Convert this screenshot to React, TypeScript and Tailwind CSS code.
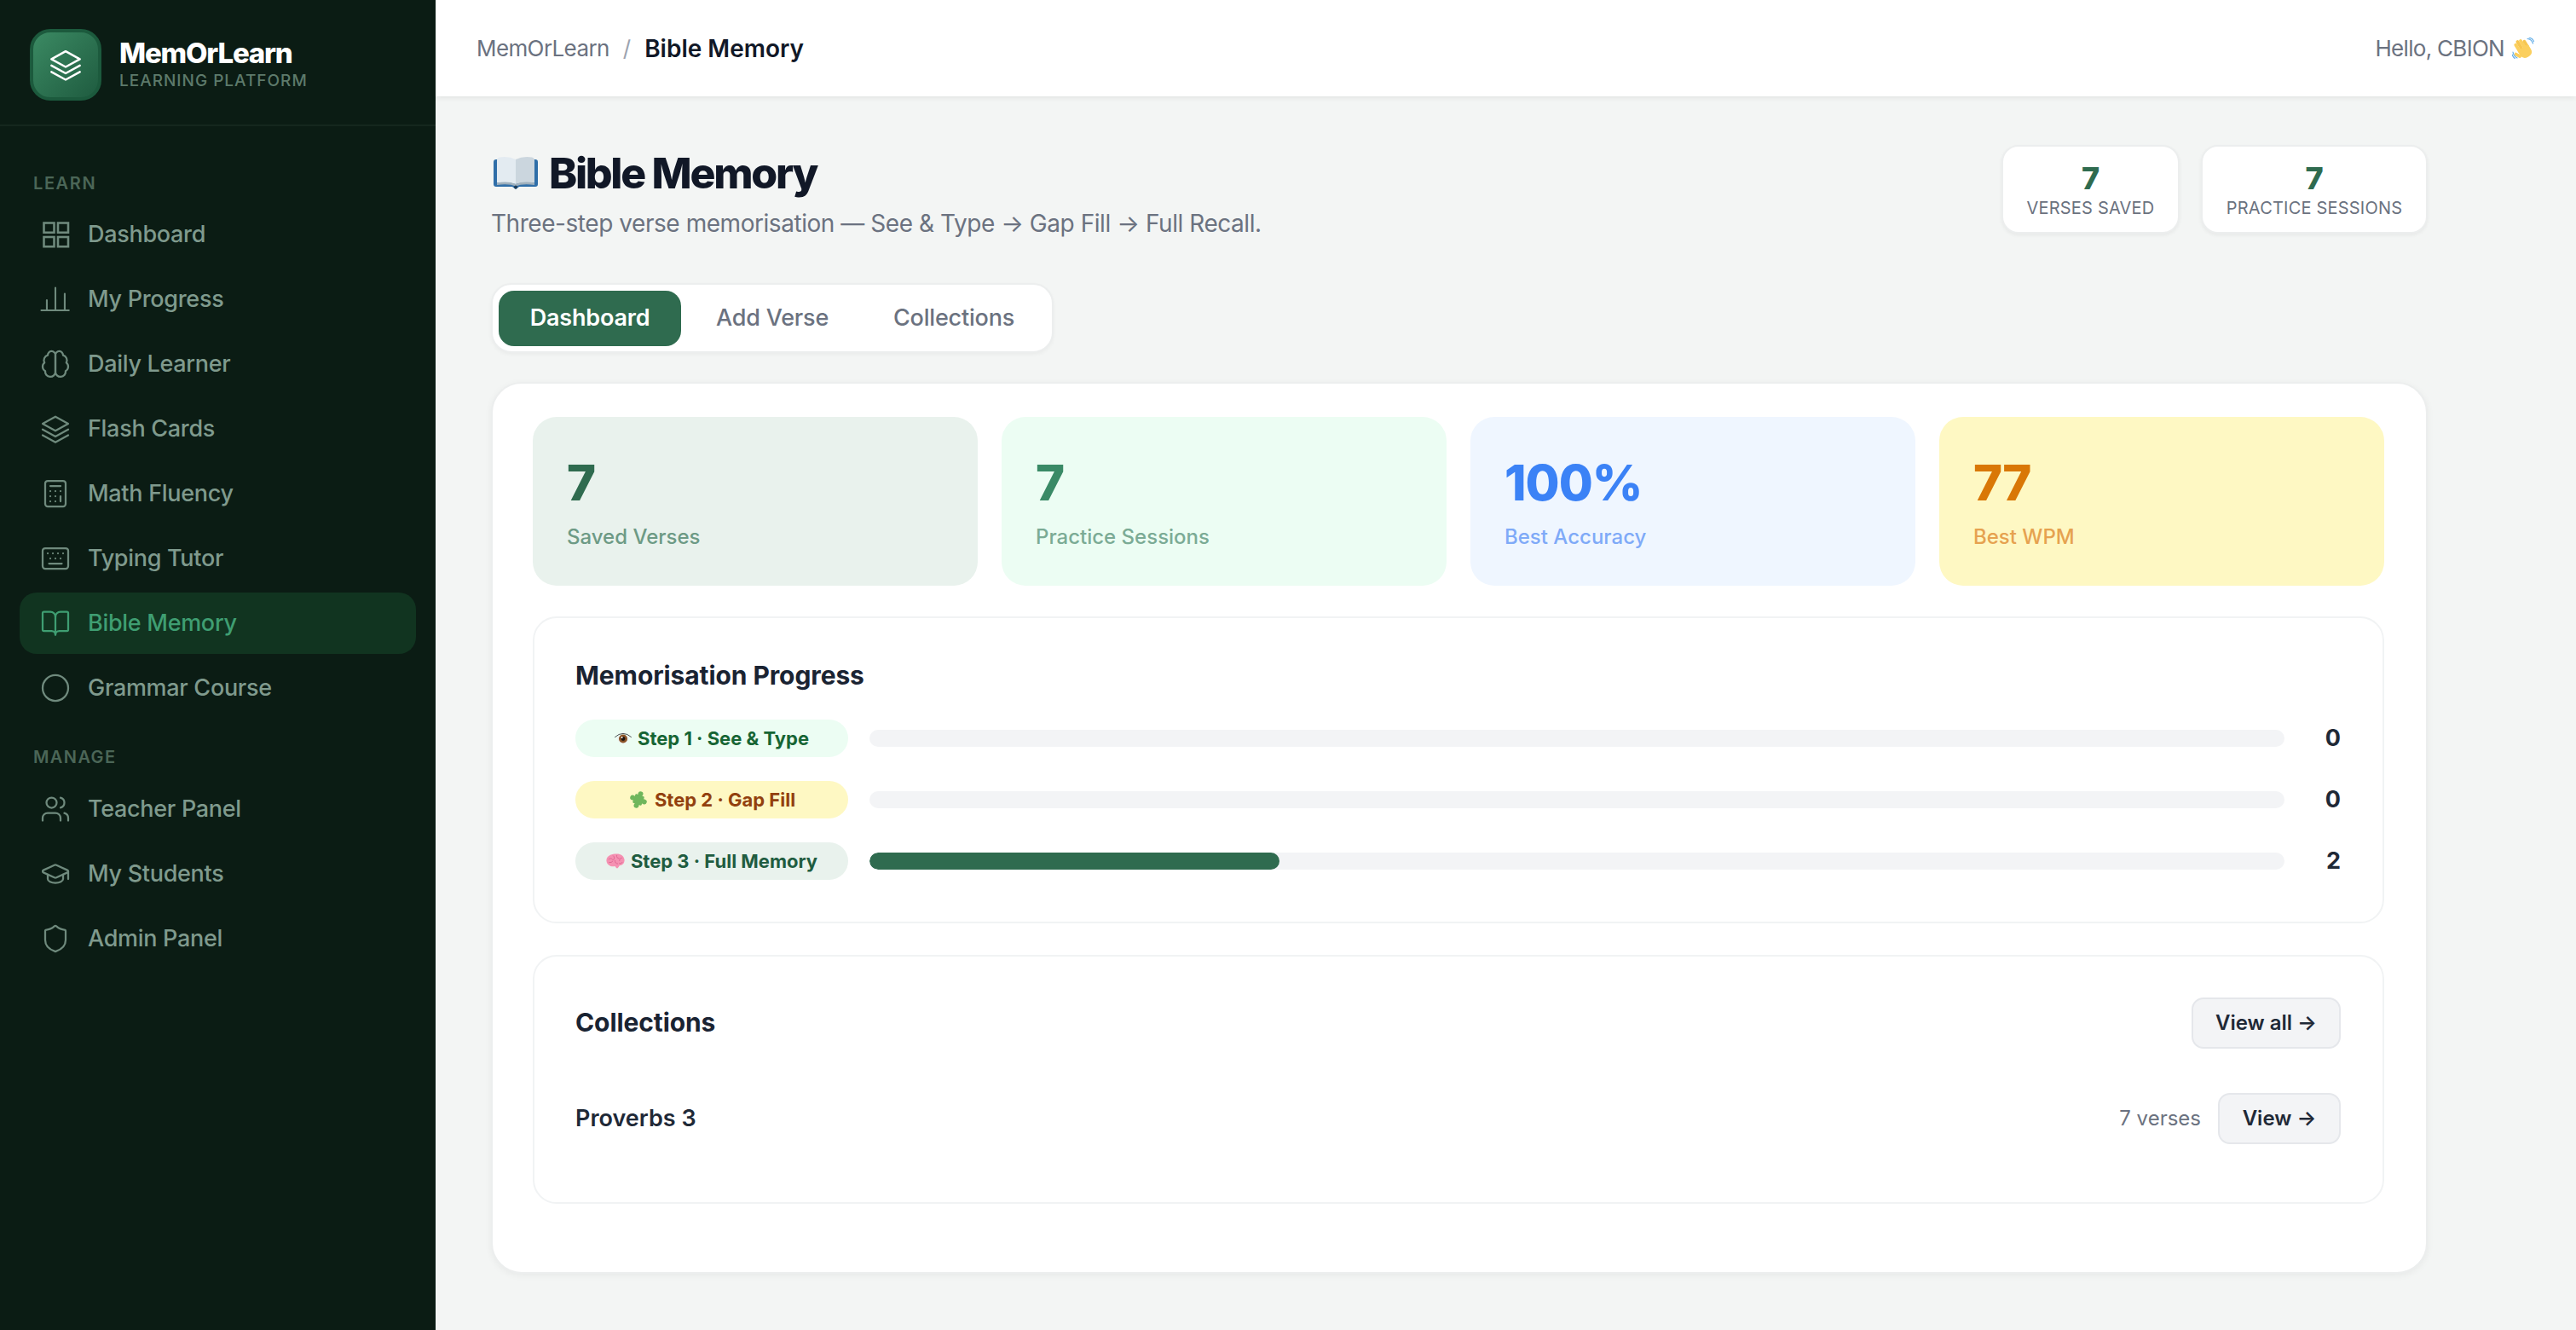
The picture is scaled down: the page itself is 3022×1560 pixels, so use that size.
import React from 'react';
import {
  BookOpen,
  Calculator,
  GraduationCap,
  Keyboard,
  Shield,
  Users,
  Circle,
} from 'lucide-react';

const font = "font-['Inter','Liberation_Sans',sans-serif]";

type IconProps = { className?: string; strokeWidth?: number };

function BarsIcon({ className }: IconProps) {
  return (
    <svg viewBox="0 0 24 24" fill="none" stroke="currentColor" strokeWidth="1.4" strokeLinecap="round" className={className}>
      <path d="M1 20.700h21.500M5.300 20.700v-8M12 20.700V3M19.300 20.700V7.700" />
    </svg>
  );
}

function GridIcon({ className }: IconProps) {
  return (
    <svg viewBox="0 0 24 24" fill="none" stroke="currentColor" strokeWidth="1.7" className={className}>
      <rect x="3" y="3" width="8" height="7.500" />
      <rect x="14" y="3" width="8" height="7.500" />
      <rect x="3" y="14" width="8" height="7.500" />
      <rect x="14" y="14" width="8" height="7.500" />
    </svg>
  );
}

function BrainIcon({ className }: IconProps) {
  return (
    <svg viewBox="0 0 24 24" fill="none" stroke="currentColor" strokeWidth="1.5" strokeLinejoin="round" className={className}>
      <path d="M12 5a3 3 0 1 0-5.997.125 4 4 0 0 0-2.526 5.770 4 4 0 0 0 .556 6.588A4 4 0 1 0 12 18Z" />
      <path d="M12 5a3 3 0 1 1 5.997.125 4 4 0 0 1 2.526 5.770 4 4 0 0 1-.556 6.588A4 4 0 1 1 12 18Z" />
    </svg>
  );
}

function LayersIcon({ className, strokeWidth = 1.4 }: IconProps) {
  return (
    <svg viewBox="0 0 24 24" fill="none" stroke="currentColor" strokeWidth={strokeWidth} strokeLinejoin="round" strokeLinecap="round" className={className}>
      <path d="M12 2.500 22 8l-10 5.500L2 8z" />
      <path d="M2 12.500 12 18l10-5.500" />
      <path d="M2 17l10 5.500L22 17" />
    </svg>
  );
}

function BookEmoji({ className }: IconProps) {
  return (
    <svg viewBox="0 0 52 38" className={className}>
      <path d="M0 6q0-3 3-3h46q3 0 3 3v26q0 3-3 3H30l-4 3-4-3H3q-3 0-3-3z" fill="#2f6ea8" />
      <path d="M4 4q0-3 3-3.500Q18-1 26 3v29q-9-3-22-1.500z" fill="#e3ebf1" />
      <path d="M48 4q0-3-3-3.500Q34-1 26 3v29q9-3 22-1.500z" fill="#cbd6de" />
      <path d="M4 30.500q13-2.500 22 1.500 9-4 22-1.500V33q-14-2-22 1.500Q18 31 4 33z" fill="#9fb0bc" />
      <circle cx="26" cy="35.500" r="2" fill="#1d3c58" />
    </svg>
  );
}

function WaveEmoji({ className }: IconProps) {
  return (
    <svg viewBox="0 0 26 26" className={className}>
      <g transform="rotate(-32 13 14)" fill="#fbcf5e">
        <rect x="6.500" y="3" width="3.800" height="13" rx="1.900" />
        <rect x="10.200" y="1" width="3.800" height="14" rx="1.900" fill="#f7c650" />
        <rect x="13.900" y="2" width="3.800" height="13" rx="1.900" />
        <rect x="17.400" y="5" width="3.600" height="11" rx="1.800" fill="#f7c650" />
        <path d="M6.500 12H21v6q0 6.500-7.250 6.500T6.500 18z" />
        <rect x="2" y="12" width="3.800" height="9" rx="1.900" transform="rotate(-30 4 16)" />
      </g>
      <path d="M18 1.500q5 .5 6.500 5.500M20 .2q4 .5 5.500 4.300M1 17q.5 4.500 5 7M.2 20q.5 2.500 3 4.500" fill="none" stroke="#5aa9e6" strokeWidth="1.100" strokeLinecap="round" />
    </svg>
  );
}

function EyeEmoji({ className }: IconProps) {
  return (
    <svg viewBox="0 0 20 14" className={className}>
      <path d="M3 6Q10 1 17 6 15.500 13.500 10 13.500 4.500 13.500 3 6z" fill="#eef1f2" />
      <circle cx="10" cy="7.500" r="5" fill="#8a5327" />
      <circle cx="10" cy="7.500" r="2.400" fill="#1c1410" />
      <circle cx="8.600" cy="6" r="1" fill="#fff" />
      <path d="M.5 5.500Q10-3 19.500 5.500" fill="none" stroke="#4b4f52" strokeWidth="1" strokeLinecap="round" />
    </svg>
  );
}

function PuzzleEmoji({ className }: IconProps) {
  return (
    <svg viewBox="0 0 24 24" className={className}>
      <g transform="rotate(20 12 12)" fill="#6fb65c">
        <rect x="6.500" y="6.500" width="11" height="11" rx="1" />
        <circle cx="12" cy="4.800" r="3" />
        <circle cx="19.200" cy="12" r="3" />
        <circle cx="12" cy="19.200" r="3" />
        <circle cx="4.800" cy="12" r="3" />
      </g>
    </svg>
  );
}

function BrainEmoji({ className }: IconProps) {
  return (
    <svg viewBox="0 0 21 17" className={className}>
      <path d="M10 .5C15-.5 20 2 20.600 7c.3 4-2.600 6.500-5.600 6.500-.8 1-1.300 3-2.700 3-1.100 0-1.500-1.600-2.300-2.300C6 15.500.7 13 .4 8 .2 3.500 5 .8 10 .5z" fill="#f591b2" />
      <path d="M3 6.500c2-1.500 3.500-1 4.500.5M8 2.500c1.500 1 1.500 3 .5 4.500M12 2c-.5 2 .5 3.500 2.500 3.500M17.500 5c-1.500 0-2.500 1-2.500 3M3.500 10c2 .5 3-.5 4-1.500M10 8c0 2 1 3.500 3 3.500M15 11c1 .5 2.500 0 3-1" fill="none" stroke="#d9608c" strokeWidth=".8" strokeLinecap="round" />
    </svg>
  );
}

const learnItems = [
  { label: 'Dashboard', icon: GridIcon },
  { label: 'My Progress', icon: BarsIcon },
  { label: 'Daily Learner', icon: BrainIcon },
  { label: 'Flash Cards', icon: LayersIcon },
  { label: 'Math Fluency', icon: Calculator },
  { label: 'Typing Tutor', icon: Keyboard },
  { label: 'Bible Memory', icon: BookOpen, active: true },
  { label: 'Grammar Course', icon: Circle },
];

const manageItems = [
  { label: 'Teacher Panel', icon: Users },
  { label: 'My Students', icon: GraduationCap },
  { label: 'Admin Panel', icon: Shield },
];

function NavItem({ label, icon: Icon, active }: { label: string; icon: React.ComponentType<any>; active?: boolean }) {
  return (
    <div className={`flex h-[72px] items-center gap-[20px] rounded-[20px] px-[24px] ${active ? 'bg-[#113420] text-[#3f9e72]' : 'text-[#7f9a8d]'}`}>
      <Icon className={`h-[36px] w-[36px] shrink-0 ${active ? 'text-[#3f9e72]' : 'text-[#6f8a7d]'}`} strokeWidth={1.5} />
      <span className="text-[27px] font-medium tracking-[-0.3px]">{label}</span>
    </div>
  );
}

const statCards = [
  { value: '7', label: 'Saved Verses', bg: 'bg-[#e9f2ed]', num: 'text-[#2f6b4f]', sub: 'text-[#6d9a85]' },
  { value: '7', label: 'Practice Sessions', bg: 'bg-[#ecfdf3]', num: 'text-[#3a8a66]', sub: 'text-[#7bab95]' },
  { value: '100%', label: 'Best Accuracy', bg: 'bg-[#eff6ff]', num: 'text-[#3b82f6]', sub: 'text-[#7faaf8]' },
  { value: '77', label: 'Best WPM', bg: 'bg-[#fef8c3]', num: 'text-[#d97706]', sub: 'text-[#e6a250]' },
];

const steps = [
  { label: 'Step 1 · See & Type', icon: EyeEmoji, iconClass: 'h-[14px] w-[20px]', pill: 'bg-[#ecfdf3] text-[#166534]', count: 0, pct: 0 },
  { label: 'Step 2 · Gap Fill', icon: PuzzleEmoji, iconClass: 'h-[24px] w-[24px]', pill: 'bg-[#fef8c3] text-[#92400e]', count: 0, pct: 0 },
  { label: 'Step 3 · Full Memory', icon: BrainEmoji, iconClass: 'h-[18px] w-[22px]', pill: 'bg-[#e9f2ed] text-[#1f5c40]', count: 2, pct: 29 },
];

export default function App() {
  return (
    <div className={`flex h-[1560px] w-full overflow-hidden bg-[#f3f5f4] ${font}`}>
      <aside className="w-[511px] shrink-0 bg-[#0b1c14]">
        <div className="flex h-[148px] items-center gap-[21px] border-b-2 border-[#15271e] px-[35px] pt-[6px]">
          <div className="flex h-[84px] w-[84px] items-center justify-center rounded-[24px] border-[4px] border-[#1c5a3d] bg-gradient-to-br from-[#3b8a63] to-[#1f5c40]">
            <LayersIcon className="h-[40px] w-[40px] text-white" strokeWidth={1.5} />
          </div>
          <div>
            <div className="text-[33px] font-extrabold leading-[38px] tracking-[-1.2px] text-white">MemOrLearn</div>
            <div className="text-[19px] font-medium leading-[28px] tracking-[1px] text-[#5d7a6b]">LEARNING PLATFORM</div>
          </div>
        </div>
        <nav className="px-[23px] pt-[54px]">
          <div className="mb-[11px] px-[16px] text-[20px] font-semibold leading-[26px] tracking-[1.6px] text-[#4b6657]">LEARN</div>
          <div className="flex flex-col gap-[4px]">
            {learnItems.map((item) => (
              <NavItem key={item.label} {...item} />
            ))}
          </div>
          <div className="mb-[12px] mt-[32px] px-[16px] text-[20px] font-semibold leading-[26px] tracking-[1.4px] text-[#4b6657]">MANAGE</div>
          <div className="flex flex-col gap-[4px]">
            {manageItems.map((item) => (
              <NavItem key={item.label} {...item} />
            ))}
          </div>
        </nav>
      </aside>

      <main className="min-w-0 flex-1">
        <header className="flex h-[113px] items-center justify-between bg-white pl-[48px] pr-[49px] shadow-[0_2px_6px_rgba(0,0,0,0.07)]">
          <div className="flex items-center text-[26px] text-[#6b7280]">
            <span className="tracking-[-0.6px]">MemOrLearn</span>
            <span className="mx-[16px] text-[#9ca3af]">/</span>
            <span className="text-[28px] font-semibold text-[#111827]">Bible Memory</span>
          </div>
          <div className="flex items-center gap-[9px] text-[26px] tracking-[-0.7px] text-[#6b7280]">
            <span>Hello, CBION</span>
            <WaveEmoji className="h-[26px] w-[26px]" />
          </div>
        </header>

        <div className="w-[2337px] pl-[65px] pt-[57px]">
          <div className="flex items-start justify-between">
            <div className="pt-[2px]">
              <div className="flex items-center gap-[13px] pl-[3px]">
                <BookEmoji className="h-[38px] w-[52px]" />
                <h1 className="text-[50px] font-extrabold leading-[62px] tracking-[-2.300px] text-[#111827]">Bible Memory</h1>
              </div>
              <p className="mt-[9px] text-[28px] leading-[38px] tracking-[-0.450px] text-[#6b7280]">Three-step verse memorisation — See &amp; Type → Gap Fill → Full Recall.</p>
            </div>
            <div className="flex gap-[25px]">
              <div className="flex h-[104px] w-[209px] flex-col items-center justify-center rounded-[20px] border-2 border-[#eceeee] bg-white shadow-[0_2px_4px_rgba(0,0,0,0.05)]">
                <div className="text-[36px] font-extrabold leading-[44px] text-[#2f6b4f]">7</div>
                <div className="text-[20px] leading-[26px] tracking-[0.2px] text-[#6b7280]">VERSES SAVED</div>
              </div>
              <div className="flex h-[104px] w-[266px] flex-col items-center justify-center rounded-[20px] border-2 border-[#eceeee] bg-white shadow-[0_2px_4px_rgba(0,0,0,0.05)]">
                <div className="text-[36px] font-extrabold leading-[44px] text-[#2f6b4f]">7</div>
                <div className="text-[20px] leading-[26px] tracking-[0.2px] text-[#6b7280]">PRACTICE SESSIONS</div>
              </div>
            </div>
          </div>

          <div className="mt-[51px] flex h-[82px] w-[660px] items-center gap-0 rounded-[24px] border-2 border-[#eceeee] bg-white px-[7px] shadow-[0_2px_4px_rgba(0,0,0,0.04)]">
            <div className="flex h-[65px] w-[214px] items-center justify-center rounded-[18px] bg-[#2f6b4f] text-[27px] font-semibold tracking-[-0.2px] text-white">Dashboard</div>
            <div className="flex h-[65px] w-[214px] items-center justify-center text-[27px] font-medium tracking-[-0.2px] text-[#6b7280]">Add Verse</div>
            <div className="flex h-[65px] w-[212px] items-center justify-center text-[27px] font-medium tracking-[-0.2px] text-[#6b7280]">Collections</div>
          </div>

          <div className="mt-[34px] h-[1046px] rounded-[36px] border-2 border-[#eceeee] bg-white pl-[47px] pr-[49px] pt-[39px] shadow-[0_2px_8px_rgba(0,0,0,0.05)]">
            <div className="grid grid-cols-4 gap-[28px]">
              {statCards.map((card) => (
                <div key={card.label} className={`flex h-[198px] flex-col justify-center rounded-[28px] px-[40px] ${card.bg}`}>
                  <div className={`text-[58px] font-extrabold leading-[70px] tracking-[-1px] ${card.num}`}>{card.value}</div>
                  <div className={`mt-[14px] text-[24px] font-medium leading-[30px] ${card.sub}`}>{card.label}</div>
                </div>
              ))}
            </div>

            <section className="mt-[36px] h-[360px] rounded-[28px] border-2 border-[#f1f3f4] pl-[48px] pr-[49px] pt-[47px]">
              <h2 className="text-[30px] font-bold leading-[40px] tracking-[-0.1px] text-[#1a2332]">Memorisation Progress</h2>
              <div className="mt-[32px] flex flex-col gap-[28px]">
                {steps.map((step) => {
                  const Icon = step.icon;
                  return (
                    <div key={step.label} className="flex h-[44px] items-center">
                      <div className={`flex h-[44px] w-[320px] shrink-0 items-center justify-center gap-[7px] rounded-full text-[22px] font-bold ${step.pill}`}>
                        <Icon className={step.iconClass} />
                        <span>{step.label}</span>
                      </div>
                      <div className="ml-[25px] h-[20px] w-[1660px] overflow-hidden rounded-full bg-[#f3f4f6]">
                        <div className="h-full rounded-full bg-[#2f6b4f]" style={{ width: `${step.pct}%` }} />
                      </div>
                      <div className="flex-1 text-right text-[27px] font-bold text-[#1f2937]">{step.count}</div>
                    </div>
                  );
                })}
              </div>
            </section>

            <section className="mt-[37px] h-[292px] rounded-[28px] border-2 border-[#f1f3f4] pl-[48px] pr-[49px]">
              <div className="flex h-[108px] items-end justify-between">
                <h2 className="pb-[11px] text-[30px] font-bold leading-[40px] tracking-[-0.1px] text-[#1a2332]">Collections</h2>
                <button className="h-[60px] w-[175px] rounded-[14px] border-2 border-[#e5e7eb] bg-[#f3f4f6] text-[24px] font-semibold text-[#1f2937]">View all →</button>
              </div>
              <div className="mt-[52px] flex h-[60px] items-center justify-between">
                <span className="text-[27px] font-semibold text-[#1f2937]">Proverbs 3</span>
                <div className="flex items-center gap-[20px]">
                  <span className="text-[24px] text-[#6b7280]">7 verses</span>
                  <button className="h-[60px] w-[144px] rounded-[14px] border-2 border-[#e5e7eb] bg-[#f3f4f6] text-[24px] font-semibold text-[#1f2937]">View →</button>
                </div>
              </div>
            </section>
          </div>
        </div>
      </main>
    </div>
  );
}
